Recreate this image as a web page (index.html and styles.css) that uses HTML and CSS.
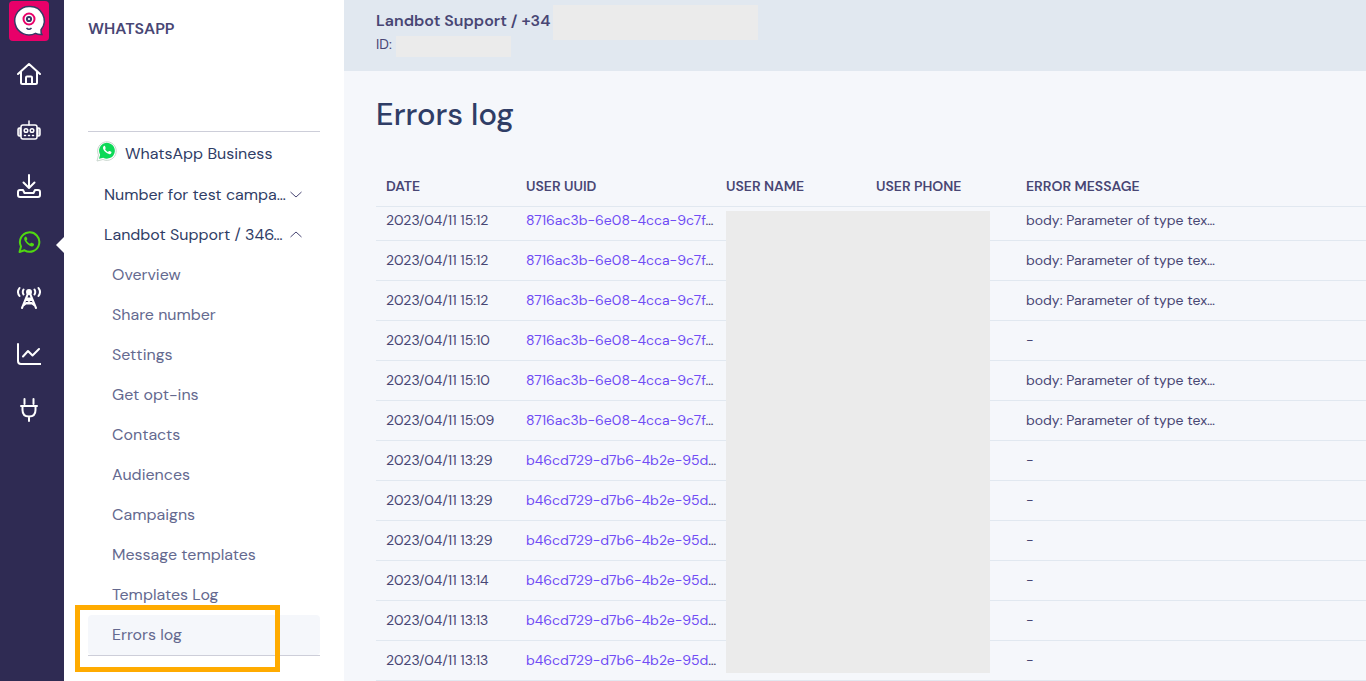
FILE: index.html
```html
<!DOCTYPE html>
<html lang="en">
<head>
<meta charset="utf-8">
<title>Errors log</title>
<link rel="stylesheet" href="styles.css">
</head>
<body>
<div class="app">
  <nav class="rail" aria-label="Main">
    <a class="logo" href="#" aria-label="Landbot">
      <svg width="40" height="40" viewBox="0 0 40 40">
        <rect width="40" height="40" rx="4" fill="#e80069"/>
        <path d="M20 5.500a14.200 14.200 0 1 0 6.500 26.800c1.800 1 4 1.400 6.300 1.200-.7-1.200-.9-2.900-.8-4.800A14.200 14.200 0 0 0 20 5.500z" fill="#fff" stroke="#363b66" stroke-width="1.500"/>
        <circle cx="20" cy="18" r="5.500" fill="#fff" stroke="#e80069" stroke-width="2"/>
        <circle cx="20" cy="18" r="2.100" fill="#fff" stroke="#363b66" stroke-width="2"/>
        <path d="M17.500 27q2.500 2.500 5 0" fill="none" stroke="#363b66" stroke-width="1.600"/>
      </svg>
    </a>
    <a class="rail-link" href="#" aria-label="Home">
      <svg class="icon" viewBox="0 0 24 24"><path d="M1 12 12 2l11 10M4 10v10.500Q4 22 5.500 22h13q1.500 0 1.500-1.500V10M9 21.500v-6q0-1 1-1h4q1 0 1 1v6"/></svg>
    </a>
    <a class="rail-link" href="#" aria-label="Bots">
      <svg class="icon thin" viewBox="0 0 24 24"><path d="M12 3v4"/><rect x="4" y="7" width="16" height="14" rx="2"/><path d="M3.500 10H2.500Q1 10 1 11.500v5Q1 18 2.500 18h1zM20.500 10h1Q23 10 23 11.500v5q0 1.500-1.500 1.500h-1z" fill="#fff" fill-opacity=".5"/><circle cx="9" cy="12.500" r="1.800"/><circle cx="15" cy="12.500" r="1.800"/><path d="M7.500 17.500h1M11.500 17.500h1M15.500 17.500h1"/></svg>
    </a>
    <a class="rail-link" href="#" aria-label="Inbox">
      <svg class="icon" viewBox="0 0 24 24"><path d="M12 1v12.500M6.500 8.500 12 14l5.500-5.500M6 16H3q-2 0-2 2v3q0 2 2 2h18q2 0 2-2v-3q0-2-2-2h-3l-1.500 3h-9z"/></svg>
    </a>
    <a class="rail-link current" href="#" aria-label="WhatsApp" aria-current="page">
      <svg class="icon" viewBox="0 0 24 24"><path d="M2.500 22 4 16.500A9.700 9.700 0 1 1 7.500 20.300z"/><path d="M8.300 6.800c-1.800 1-1.300 3.600 1.200 6.400 2.700 2.900 6 4.300 7.200 2.300.7-1.200.3-1.600-.4-2l-1.500-.7c-.7-.3-1 .1-1.800 1-1.300-.5-2.700-1.700-3.500-3.300.8-.9 1-1.100.7-1.900l-.6-1.300c-.3-.6-.7-.9-1.300-.5z" fill="#50d811" stroke="none"/></svg>
    </a>
    <a class="rail-link" href="#" aria-label="Broadcast">
      <svg class="icon" viewBox="0 0 24 24"><circle cx="12" cy="6" r="2" fill="#fff"/><path d="M11.200 7 5 22M12.800 7 19 22M9.500 12.500h5M8 17.500h8M14.500 13 7 19M9.500 13l7.500 6M2.500 2Q-.500 6 2.500 10M6.500 3.500Q5 6 6.500 8.500M21.500 2q3 4 0 8M17.500 3.500q1.500 2.500 0 5"/></svg>
    </a>
    <a class="rail-link" href="#" aria-label="Metrics">
      <svg class="icon" viewBox="0 0 24 24"><path d="M1 2v17q0 3 3 3h19.500M6 14.500l5-5.500 4.500 4.500L22 7"/></svg>
    </a>
    <a class="rail-link" href="#" aria-label="Integrations">
      <svg class="icon" viewBox="0 0 24 24"><path d="M7.500 1v5M16.500 1v5M4 8h16M5.500 8v4q0 6.500 6.500 6.500t6.500-6.500V8M12 18.500V23"/></svg>
    </a>
  </nav>

  <aside class="side">
    <h2 class="side-title">WHATSAPP</h2>
    <nav class="side-nav" aria-label="WhatsApp">
      <div class="brand">
        <svg width="22" height="22" viewBox="0 0 22 22"><path d="M1 21 2.500 15A9.300 9.300 0 1 1 7 19.500z" fill="#fff" stroke="#c9d6ce"/><path d="M3 18.800 4.100 14.700A7.900 7.900 0 1 1 7.200 17.700z" fill="#0dd957"/><path d="M8.300 5.800c-2 1-1.500 3.500.6 5.800 2.200 2.300 5.200 3.400 6.300 1.700.6-1 .2-1.400-.4-1.700l-1.300-.6c-.6-.2-.9.200-1.500.9-1.200-.4-2.300-1.400-3-2.800.8-.8.800-1 .5-1.700L9.100 6.200q-.3-.6-.8-.4z" fill="#fff"/></svg>
        <span>WhatsApp Business</span>
      </div>
      <button class="account" type="button" aria-expanded="false"><span>Number for test campa…</span><svg class="chevron" viewBox="0 0 14 14"><path d="M1.500 5 7 10l5.500-5"/></svg></button>
      <button class="account" type="button" aria-expanded="true"><span>Landbot Support / 346…</span><svg class="chevron" viewBox="0 0 14 14"><path d="M1.500 10 7 5l5.500 5"/></svg></button>
      <a class="item" href="#">Overview</a>
      <a class="item" href="#">Share number</a>
      <a class="item" href="#">Settings</a>
      <a class="item" href="#">Get opt-ins</a>
      <a class="item" href="#">Contacts</a>
      <a class="item" href="#">Audiences</a>
      <a class="item" href="#">Campaigns</a>
      <a class="item" href="#">Message templates</a>
      <a class="item" href="#">Templates Log</a>
      <a class="item selected" href="#" aria-current="page">Errors log</a>
    </nav>
  </aside>

  <main class="main">
    <header class="channel">
      <div class="channel-name">Landbot Support / +34<span class="mask mask-phone"></span></div>
      <div class="channel-id">ID:<span class="mask mask-id"></span></div>
    </header>
    <section class="content">
      <h1 class="title">Errors log</h1>
      <div class="log">
        <table class="table">
          <colgroup><col class="c-date"><col class="c-uuid"><col class="c-name"><col class="c-phone"><col></colgroup>
          <thead><tr><th>DATE</th><th>USER UUID</th><th>USER NAME</th><th>USER PHONE</th><th>ERROR MESSAGE</th></tr></thead>
          <tbody>
            <tr><td>2023/04/11 15:12</td><td><a href="#">8716ac3b-6e08-4cca-9c7f</a>…</td><td></td><td></td><td>body: Parameter of type tex…</td></tr>
            <tr><td>2023/04/11 15:12</td><td><a href="#">8716ac3b-6e08-4cca-9c7f</a>…</td><td></td><td></td><td>body: Parameter of type tex…</td></tr>
            <tr><td>2023/04/11 15:12</td><td><a href="#">8716ac3b-6e08-4cca-9c7f</a>…</td><td></td><td></td><td>body: Parameter of type tex…</td></tr>
            <tr><td>2023/04/11 15:10</td><td><a href="#">8716ac3b-6e08-4cca-9c7f</a>…</td><td></td><td></td><td>-</td></tr>
            <tr><td>2023/04/11 15:10</td><td><a href="#">8716ac3b-6e08-4cca-9c7f</a>…</td><td></td><td></td><td>body: Parameter of type tex…</td></tr>
            <tr><td>2023/04/11 15:09</td><td><a href="#">8716ac3b-6e08-4cca-9c7f</a>…</td><td></td><td></td><td>body: Parameter of type tex…</td></tr>
            <tr><td>2023/04/11 13:29</td><td><a href="#">b46cd729-d7b6-4b2e-95d</a>…</td><td></td><td></td><td>-</td></tr>
            <tr><td>2023/04/11 13:29</td><td><a href="#">b46cd729-d7b6-4b2e-95d</a>…</td><td></td><td></td><td>-</td></tr>
            <tr><td>2023/04/11 13:29</td><td><a href="#">b46cd729-d7b6-4b2e-95d</a>…</td><td></td><td></td><td>-</td></tr>
            <tr><td>2023/04/11 13:14</td><td><a href="#">b46cd729-d7b6-4b2e-95d</a>…</td><td></td><td></td><td>-</td></tr>
            <tr><td>2023/04/11 13:13</td><td><a href="#">b46cd729-d7b6-4b2e-95d</a>…</td><td></td><td></td><td>-</td></tr>
            <tr><td>2023/04/11 13:13</td><td><a href="#">b46cd729-d7b6-4b2e-95d</a>…</td><td></td><td></td><td>-</td></tr>
          </tbody>
        </table>
        <div class="mask mask-users"></div>
      </div>
    </section>
  </main>
</div>
</body>
</html>
```
FILE: styles.css
```css
*, *::before, *::after { box-sizing: border-box; }
body {
  margin: 0;
  font-family: "DM Sans", Inter, sans-serif;
  font-size: 14px;
  color: #484674;
  background: #f5f7fb;
}
a { text-decoration: none; }
.app {
  display: grid;
  grid-template-columns: 64px 280px minmax(0, 1fr);
  min-height: 100vh;
}

.rail {
  display: flex;
  flex-direction: column;
  align-items: center;
  padding: 1px 6px 0 0;
  background: #2f2b53;
}
.logo { height: 45px; }
.logo svg { display: block; }
.rail-link {
  position: relative;
  display: flex;
  align-items: center;
  justify-content: center;
  width: 58px;
  height: 56px;
}
.icon {
  width: 24px;
  height: 24px;
  fill: none;
  stroke: #fff;
  stroke-width: 2;
  stroke-linecap: round;
  stroke-linejoin: round;
}
.thin { stroke-width: 1.5; }
.current .icon { stroke: #50d811; }
.current::after {
  content: "";
  position: absolute;
  right: -6px;
  top: 23px;
  border: 8px solid transparent;
  border-left-width: 0;
  border-right-color: #fff;
}

.side { padding: 0 24px; background: #fff; }
.side-title {
  margin: 0 0 90px;
  padding-top: 17px;
  font-size: 16px;
  line-height: 24px;
  font-weight: 600;
}
.side-nav {
  position: relative;
  border-top: 1px solid #cdced9;
  border-bottom: 1px solid #cdced9;
}
.side-nav::after {
  content: "";
  position: absolute;
  left: -13px;
  bottom: -17px;
  width: 205px;
  height: 67px;
  border: 5px solid #ffab00;
}
.brand {
  display: flex;
  gap: 7px;
  height: 43px;
  padding: 8px 8px 0;
  font-size: 16px;
  line-height: 28px;
  color: #2f3d66;
}
.account {
  display: flex;
  align-items: center;
  justify-content: space-between;
  width: 100%;
  height: 40px;
  padding: 0 17px 2px 16px;
  border: 0;
  background: none;
  font: inherit;
  font-size: 16px;
  color: #2f3d66;
  white-space: nowrap;
}
.chevron { width: 14px; height: 14px; fill: none; stroke: #484674; flex: none; }
.item {
  display: block;
  padding-left: 24px;
  border-radius: 4px;
  font-size: 16px;
  line-height: 40px;
  color: #64698f;
}
.selected { background: #f5f7fb; }

.channel {
  height: 71px;
  padding: 9px 32px 0;
  background: #e1e8f0;
}
.channel-name, .channel-id { position: relative; width: max-content; }
.channel-name { font-size: 16px; line-height: 24px; font-weight: 600; }
.channel-id { line-height: 22px; }
.mask { position: absolute; background: #ebebeb; }
.mask-phone { left: 177px; top: -4px; width: 205px; height: 35px; }
.mask-id { left: 20px; top: 3px; width: 115px; height: 21px; }

.content { padding: 24px 0 0 32px; }
.title {
  margin: 0 0 32px;
  font-size: 31px;
  line-height: 40px;
  font-weight: 500;
  color: #2f3d66;
}
.log { position: relative; }
.table {
  width: 100%;
  table-layout: fixed;
  border-collapse: separate;
  border-spacing: 0;
}
.c-date { width: 140px; }
.c-uuid { width: 200px; }
.c-name, .c-phone { width: 150px; }
.table th, .table td {
  height: 40px;
  padding: 0 0 2px 10px;
  border-bottom: 1px solid #e1e8f0;
  text-align: left;
  white-space: nowrap;
}
.table th { font-weight: 600; }
.table tbody tr:first-child td { height: 34px; padding-bottom: 8px; }
.table a { color: #704cf5; }
.mask-users { left: 350px; top: 44px; width: 264px; height: 462px; }
```
